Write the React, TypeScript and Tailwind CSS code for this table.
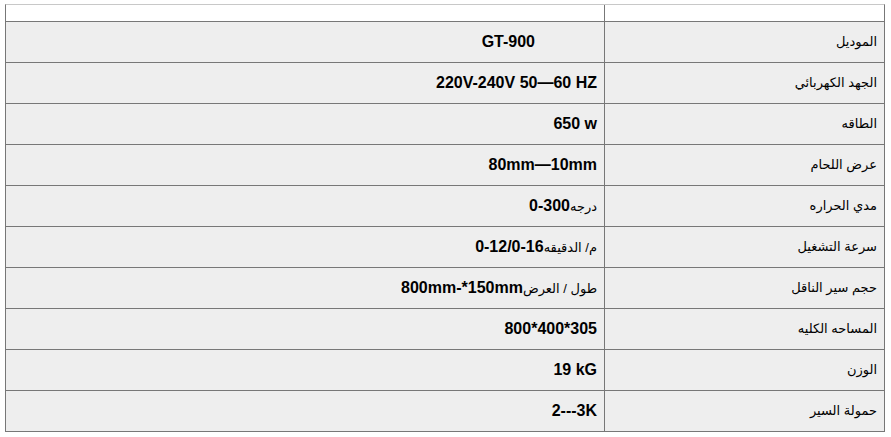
const rows: { label: string; value: string; note?: string; gap?: boolean }[] = [
  { label: 'الموديل', value: 'GT-900', gap: true },
  { label: 'الجهد الكهربائي', value: '220V-240V 50—60 HZ' },
  { label: 'الطاقه', value: '650 w' },
  { label: 'عرض اللحام', value: '80mm—10mm' },
  { label: 'مدي الحراره', value: '0-300', note: 'درجه' },
  { label: 'سرعة التشغيل', value: '0-12/0-16', note: 'م/ الدقيقه' },
  { label: 'حجم سير الناقل', value: '800mm-*150mm', note: 'طول / العرض' },
  { label: 'المساحه الكليه', value: '800*400*305' },
  { label: 'الوزن', value: '19 kG' },
  { label: 'حمولة السير', value: '2---3K' },
];

export default function App() {
  return (
    <div className="min-h-[437px] bg-white pt-[4px] pl-[5px] font-['Liberation_Sans','DejaVu_Sans',sans-serif] text-black">
      <div className="w-[880px] border-x border-t border-x-[#777] border-t-[#c8c8c8]">
        <div className="flex h-[17px] border-b border-[#777] bg-white">
          <div className="flex-1" />
          <div className="w-[280px] border-l border-[#777]" />
        </div>
        {rows.map((r) => (
          <div key={r.label} className="flex h-[41px] border-b border-[#777] bg-[#eeeeee]">
            <div dir="ltr" className="flex flex-1 items-center justify-end pr-[7px]">
              <span className={`text-[16px] leading-none font-bold ${r.gap ? 'mr-[62px]' : ''}`}>
                {r.value}
              </span>
              {r.note && (
                <span dir="rtl" className="text-[13px] leading-none">
                  {r.note}
                </span>
              )}
            </div>
            <div
              dir="rtl"
              className="flex w-[280px] items-center border-l border-[#777] pr-[7px] text-[13px]"
            >
              {r.label}
            </div>
          </div>
        ))}
      </div>
    </div>
  );
}
